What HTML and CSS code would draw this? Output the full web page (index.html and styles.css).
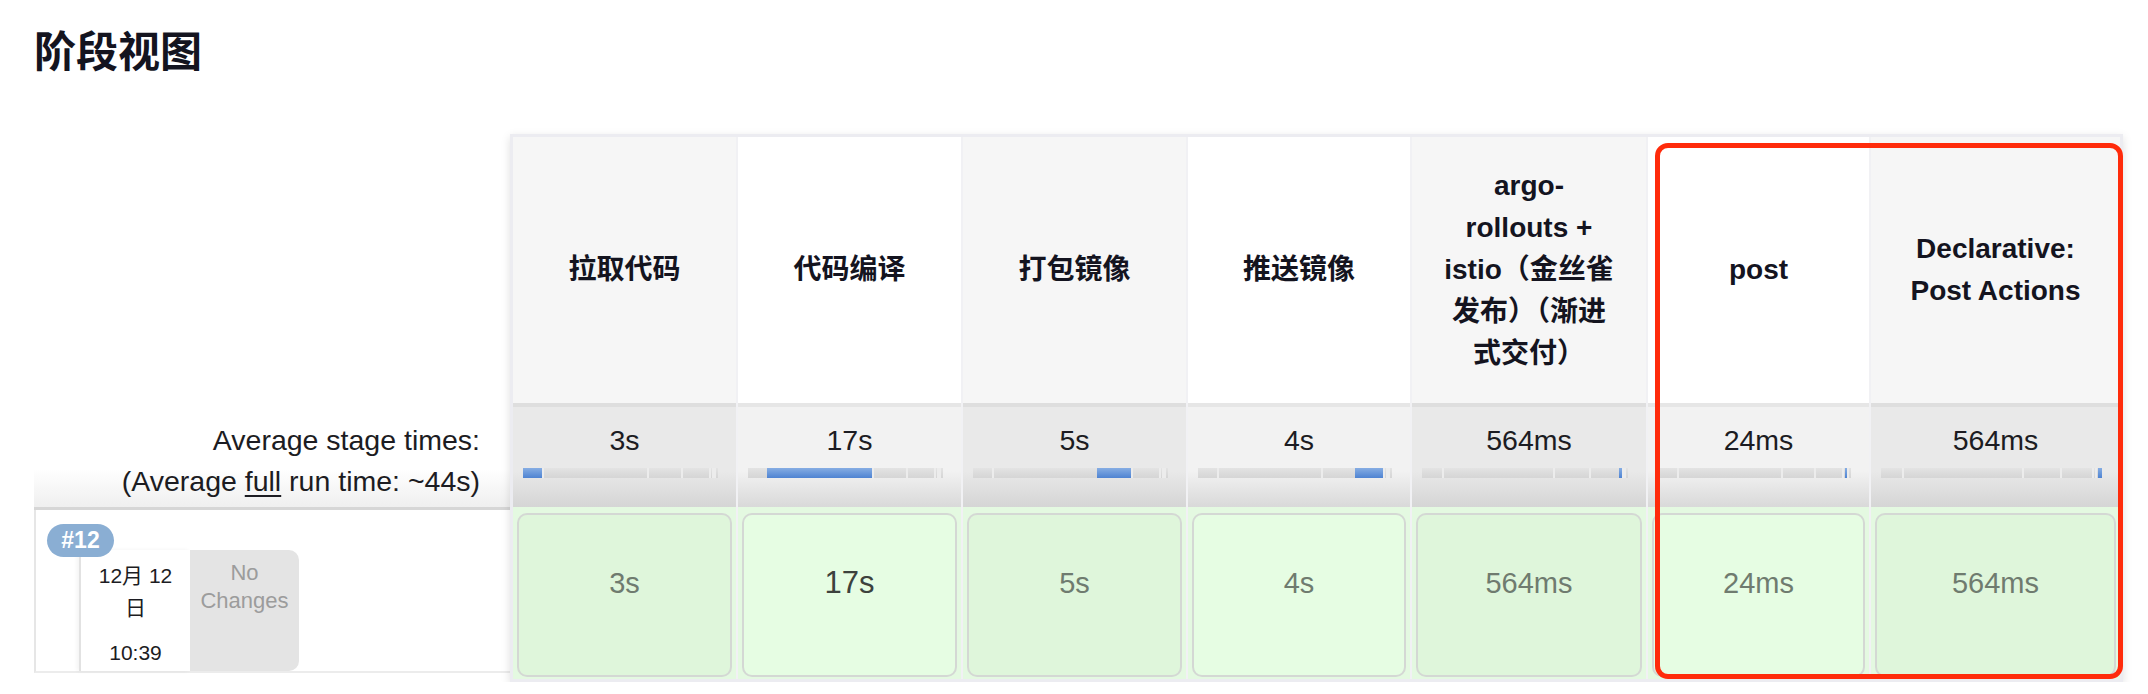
FILE: index.html
```html
<!DOCTYPE html>
<html lang="zh-CN">
<head>
<meta charset="utf-8">
<title>阶段视图</title>
<link rel="stylesheet" href="styles.css">
</head>
<body>
<div class="page">
  <h2 class="title">阶段视图</h2>
  <div class="stage-view">
    <div class="left">
      <div class="left-head"></div>
      <div class="avg-label">Average stage times:<br>(Average <u>full</u> run time: ~44s)</div>
      <div class="build-row">
        <span class="badge">#12</span>
        <div class="date">
          <div class="date-day">12月 12<br>日</div>
          <div class="date-time">10:39</div>
        </div>
        <div class="changes">No<br>Changes</div>
      </div>
    </div>
    <div class="table">
      <div class="grid">
        <div class="th odd">拉取代码</div>
        <div class="th even">代码编译</div>
        <div class="th odd">打包镜像</div>
        <div class="th even">推送镜像</div>
        <div class="th odd">argo-<br>rollouts +<br>istio（金丝雀<br>发布）（渐进<br>式交付）</div>
        <div class="th even">post</div>
        <div class="th odd">Declarative:<br>Post Actions</div>

        <div class="avg odd"><div class="avg-time">3s</div><div class="bar"><span class="seg s1 on"></span><span class="seg s2"></span><span class="seg s3"></span><span class="seg s4"></span><span class="seg s5"></span><span class="seg s6"></span><span class="seg s7"></span></div></div>
        <div class="avg even"><div class="avg-time">17s</div><div class="bar"><span class="seg s1"></span><span class="seg s2 on"></span><span class="seg s3"></span><span class="seg s4"></span><span class="seg s5"></span><span class="seg s6"></span><span class="seg s7"></span></div></div>
        <div class="avg odd"><div class="avg-time">5s</div><div class="bar"><span class="seg s1"></span><span class="seg s2"></span><span class="seg s3 on"></span><span class="seg s4"></span><span class="seg s5"></span><span class="seg s6"></span><span class="seg s7"></span></div></div>
        <div class="avg even"><div class="avg-time">4s</div><div class="bar"><span class="seg s1"></span><span class="seg s2"></span><span class="seg s3"></span><span class="seg s4 on"></span><span class="seg s5"></span><span class="seg s6"></span><span class="seg s7"></span></div></div>
        <div class="avg odd"><div class="avg-time">564ms</div><div class="bar"><span class="seg s1"></span><span class="seg s2"></span><span class="seg s3"></span><span class="seg s4"></span><span class="seg s5 on"></span><span class="seg s6"></span><span class="seg s7"></span></div></div>
        <div class="avg even"><div class="avg-time">24ms</div><div class="bar"><span class="seg s1"></span><span class="seg s2"></span><span class="seg s3"></span><span class="seg s4"></span><span class="seg s5"></span><span class="seg s6 on"></span><span class="seg s7"></span></div></div>
        <div class="avg odd"><div class="avg-time">564ms</div><div class="bar"><span class="seg s1"></span><span class="seg s2"></span><span class="seg s3"></span><span class="seg s4"></span><span class="seg s5"></span><span class="seg s6"></span><span class="seg s7 on"></span></div></div>

        <div class="bc"><div class="box odd">3s</div></div>
        <div class="bc"><div class="box even long">17s</div></div>
        <div class="bc"><div class="box odd">5s</div></div>
        <div class="bc"><div class="box even">4s</div></div>
        <div class="bc"><div class="box odd">564ms</div></div>
        <div class="bc"><div class="box even">24ms</div></div>
        <div class="bc"><div class="box odd">564ms</div></div>
      </div>
      <div class="highlight"></div>
    </div>
  </div>
</div>
</body>
</html>
```
FILE: styles.css
```css
* { box-sizing: border-box; }

body {
  margin: 0;
  background: #ffffff;
  font-family: "Liberation Sans", "Noto Sans CJK SC", sans-serif;
  color: #1c1c22;
}

.page {
  padding: 23px 0 0 34px;
}

.title {
  margin: 0;
  font-family: "Noto Sans CJK SC", sans-serif;
  font-size: 42px;
  line-height: 52px;
  font-weight: 700;
  color: #14141f;
}

.stage-view {
  display: flex;
  align-items: flex-start;
  margin-top: 59px;
}

/* ---------- left column ---------- */
.left {
  width: 476px;
  display: flex;
  flex-direction: column;
}

.left-head {
  height: 273px;
}

.avg-label {
  height: 103px;
  padding: 13px 30px 0 0;
  text-align: right;
  font-size: 28.5px;
  line-height: 41px;
  color: #1c1c22;
  background: linear-gradient(#ffffff 0%, #ffffff 62%, #efefef 100%);
  border-bottom: 3px solid #d6d6d6;
}

.avg-label u {
  text-decoration-thickness: 2px;
  text-underline-offset: 4px;
}

.build-row {
  position: relative;
  height: 163px;
  border-left: 2px solid #e6e6e6;
  border-bottom: 2px solid #ececec;
  display: flex;
  align-items: flex-end;
  padding-left: 43px;
}

.badge {
  position: absolute;
  left: 11px;
  top: 14px;
  width: 67px;
  height: 33px;
  border-radius: 17px;
  background: #8aaed3;
  color: #ffffff;
  font-weight: 700;
  font-size: 23px;
  line-height: 33px;
  text-align: center;
  z-index: 2;
}

.date {
  width: 111px;
  height: 121px;
  background: #ffffff;
  border-left: 2px solid #e2e2e2;
  box-shadow: -2px 0 4px rgba(0, 0, 0, 0.05);
  text-align: center;
  font-size: 21px;
  line-height: 32px;
  color: #1c1c22;
  padding-top: 10px;
}

.date-time {
  margin-top: 13px;
}

.changes {
  width: 109px;
  height: 121px;
  background: #e4e4e4;
  border-radius: 0 10px 10px 0;
  text-align: center;
  font-size: 22px;
  line-height: 28px;
  color: #9c9c9c;
  padding-top: 9px;
}

/* ---------- stage table ---------- */
.table {
  position: relative;
  border: 3px solid #ececf1;
  background: #f1f1f4;
  box-shadow: 0 3px 9px rgba(0, 0, 0, 0.13);
}

.grid {
  display: grid;
  grid-template-columns: 223px 223px 223px 222px 234px 221px 249px;
  grid-template-rows: 266px 104px 172px;
  column-gap: 2px;
}

.th {
  display: flex;
  align-items: center;
  justify-content: center;
  text-align: center;
  font-weight: 700;
  font-size: 28px;
  line-height: 42px;
  color: #14141f;
}

.th.odd { background: #f6f6f6; }
.th.even { background: #ffffff; }

.avg {
  border-top: 4px solid #dedede;
  padding-top: 13px;
  text-align: center;
}

.avg.odd {
  background: linear-gradient(#e9e9e9 0%, #e9e9e9 64%, #d5d5d5 100%);
}

.avg.even {
  background: linear-gradient(#f2f2f2 0%, #f2f2f2 64%, #d9d9d9 100%);
  border-top-color: #e6e6e6;
}

.avg-time {
  font-size: 28.5px;
  line-height: 40px;
  color: #1c1c22;
}

.bar {
  display: flex;
  height: 10px;
  margin: 8px 18px 0 10px;
  background: linear-gradient(#e3e3e3, #d5d5d5);
}

.seg {
  display: block;
  height: 100%;
}

.seg + .seg {
  box-shadow: inset 2px 0 0 #ececec;
}

.seg.on {
  background: linear-gradient(#86ade3, #4e83d2);
  box-shadow: none;
}

.s1 { width: 9.7%; }
.s2 { width: 53.9%; }
.s3 { width: 17.4%; }
.s4 { width: 14.4%; }
.s5 { width: 1.6%; }
.s6 { width: 1.0%; }
.s7 { width: 2.0%; }

.bc {
  padding: 6px 4px 2px;
  background: #e4f9e1;
}

.box {
  height: 164px;
  border: 2px solid #d4d8d4;
  border-radius: 10px;
  text-align: center;
  padding-top: 48px;
  font-size: 29px;
  line-height: 40px;
  color: #6f7b6f;
}

.box.odd { background: #dff6db; }
.box.even { background: #e6fde3; }

.box.long {
  color: #3d423d;
  font-size: 31px;
}

.highlight {
  position: absolute;
  left: 1142px;
  top: 6px;
  width: 468px;
  height: 536px;
  border: 5px solid #ff2b0b;
  border-radius: 13px;
  pointer-events: none;
}
```
